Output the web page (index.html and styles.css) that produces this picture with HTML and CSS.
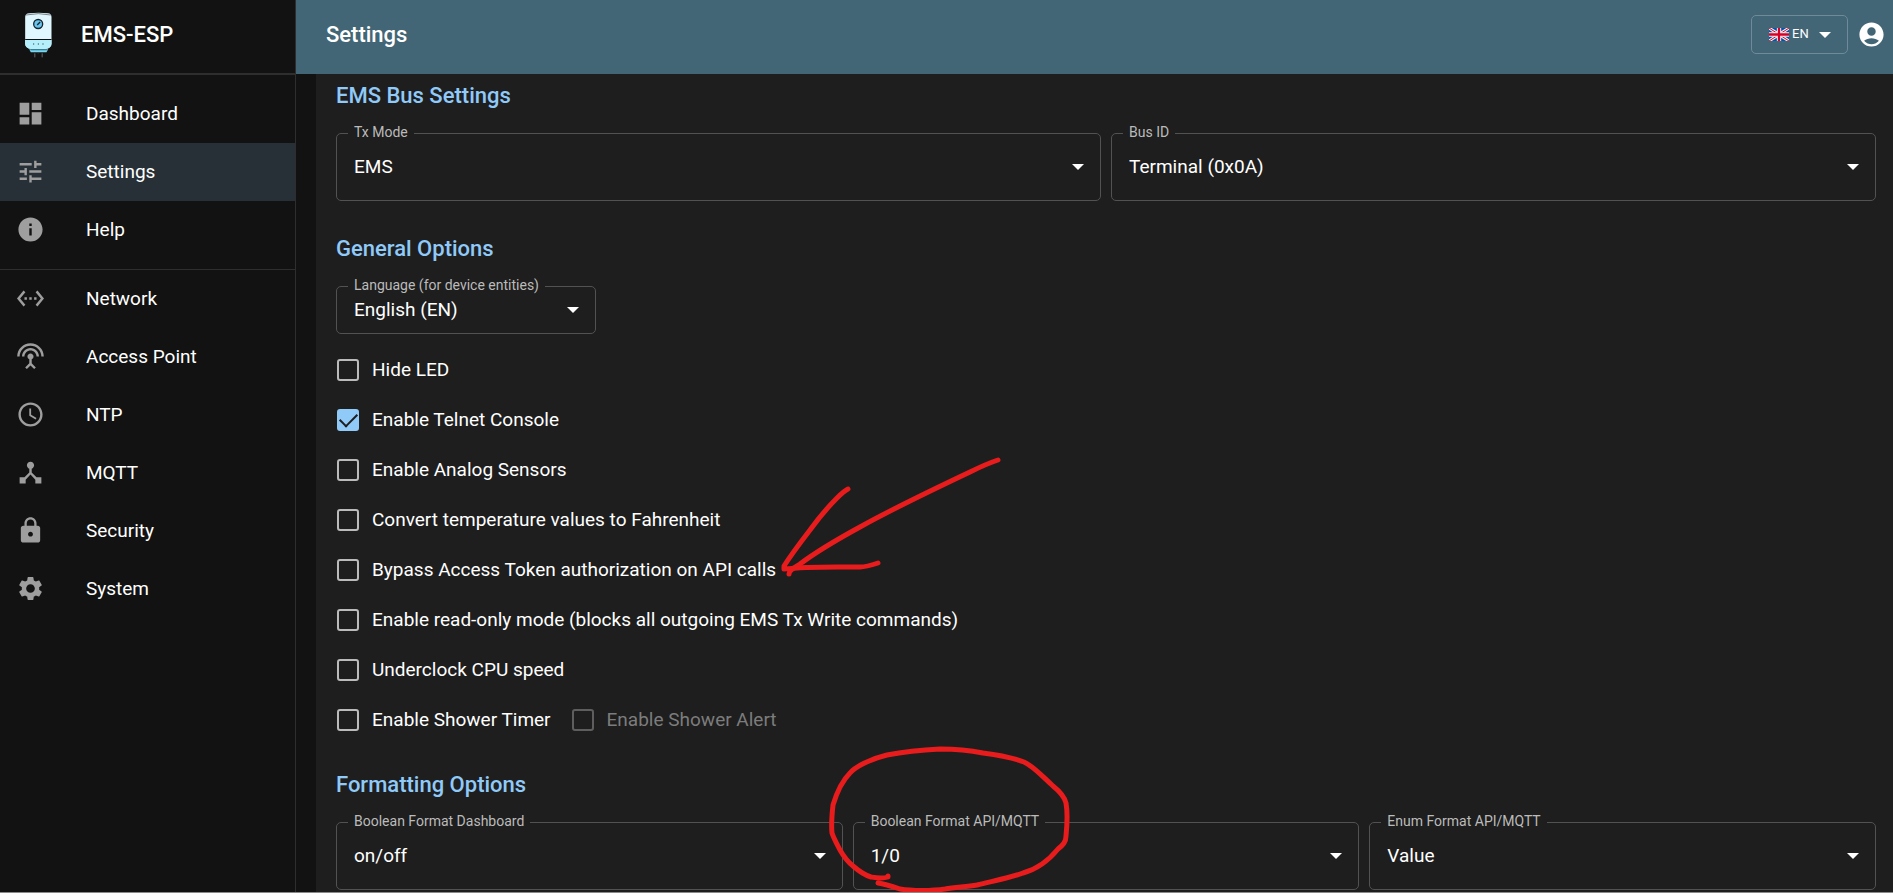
FILE: index.html
```html
<!DOCTYPE html>
<html lang="en">
<head>
<meta charset="utf-8">
<title>EMS-ESP Settings</title>
<link rel="stylesheet" href="styles.css">
</head>
<body>
<div class="app">
  <aside class="sidebar">
    <div class="brand">
      <svg class="brand-logo" viewBox="70 32 92 144" aria-hidden="true">
        <path d="M76 50Q76 40 88 39Q116 35 144 39Q155 40 155 50V130Q155 143 136 146H95Q76 143 76 130Z" fill="#e1f7ff"/>
        <path d="M76 119H155V130Q155 143 136 146H95Q76 143 76 130Z" fill="#b4effb"/>
        <path d="M76 117.500H155" stroke="#111" stroke-width="3"/>
        <path d="M78 44Q116 36 153 44" fill="none" stroke="#111" stroke-width="1.500"/>
        <circle cx="115" cy="71" r="13.500" fill="#66c4ee" stroke="#16252e" stroke-width="4"/>
        <path d="M112 74L121 65" stroke="#16252e" stroke-width="4"/>
        <path d="M100 131h3M114 131h3M128 131h3" stroke="#16252e" stroke-width="3"/>
        <path d="M88 147H145L140 156H93Z" fill="#74d9f4"/>
        <path d="M92 148.500H142" stroke="#16252e" stroke-width="1.500"/>
        <path d="M105 159V171M127 159V171" stroke="#666" stroke-width="3"/>
        <path d="M115 158V162" stroke="#333" stroke-width="2"/>
      </svg>
      <span class="brand-name">EMS-ESP</span>
    </div>
    <nav>
      <div class="nav-group nav-group-first">
        <a class="nav-item" href="#dashboard"><svg class="icon" viewBox="0 0 24 24"><path d="M3 13h8V3H3v10zm0 8h8v-6H3v6zm10 0h8V11h-8v10zm0-18v6h8V3h-8z"/></svg>Dashboard</a>
        <a class="nav-item nav-item-active" href="#settings"><svg class="icon" viewBox="0 0 24 24"><path d="M3 17v2h6v-2H3zM3 5v2h10V5H3zm10 16v-2h8v-2h-8v-2h-2v6h2zM7 9v2H3v2h4v2h2V9H7zm14 4v-2H11v2h10zm-6-4h2V7h4V5h-4V3h-2v6z"/></svg>Settings</a>
        <a class="nav-item" href="#help"><svg class="icon" viewBox="0 0 24 24"><path d="M12 2C6.480 2 2 6.480 2 12s4.480 10 10 10 10-4.480 10-10S17.520 2 12 2zm1 15h-2v-6h2v6zm0-8h-2V7h2v2z"/></svg>Help</a>
      </div>
      <div class="nav-group">
        <a class="nav-item" href="#network"><svg class="icon" viewBox="0 0 24 24"><path d="M7.770 6.760L6.230 5.480.82 12l5.410 6.520 1.540-1.280L3.420 12l4.350-5.240zM7 13h2v-2H7v2zm10-2h-2v2h2v-2zm-6 2h2v-2h-2v2zm6.770-7.520l-1.540 1.280L20.580 12l-4.350 5.240 1.540 1.280L23.180 12l-5.410-6.520z"/></svg>Network</a>
        <a class="nav-item" href="#ap"><svg class="icon" viewBox="0 0 24 24"><path d="M12 5c-3.870 0-7 3.130-7 7h2c0-2.760 2.240-5 5-5s5 2.240 5 5h2c0-3.870-3.130-7-7-7zm1 9.290c.88-.39 1.500-1.260 1.500-2.290 0-1.380-1.120-2.500-2.500-2.500S9.500 10.620 9.500 12c0 1.020.62 1.900 1.500 2.290v3.300L7.590 21 9 22.410l3-3 3 3L16.410 21 13 17.590v-3.300zM12 1C5.930 1 1 5.930 1 12h2c0-4.970 4.030-9 9-9s9 4.030 9 9h2c0-6.070-4.930-11-11-11z"/></svg>Access Point</a>
        <a class="nav-item" href="#ntp"><svg class="icon" viewBox="0 0 24 24"><path d="M11.990 2C6.470 2 2 6.480 2 12s4.470 10 9.990 10C17.520 22 22 17.520 22 12S17.520 2 11.990 2zM12 20c-4.420 0-8-3.580-8-8s3.580-8 8-8 8 3.580 8 8-3.580 8-8 8zm.5-13H11v6l5.250 3.150.75-1.230-4.500-2.670z"/></svg>NTP</a>
        <a class="nav-item" href="#mqtt"><svg class="icon" viewBox="0 0 24 24"><path d="M17 16l-4-4V8.820C14.160 8.400 15 7.300 15 6c0-1.660-1.340-3-3-3S9 4.340 9 6c0 1.300.84 2.400 2 2.820V12l-4 4H3v5h5v-3.050l4-4.200 4 4.200V21h5v-5h-4z"/></svg>MQTT</a>
        <a class="nav-item" href="#security"><svg class="icon" viewBox="0 0 24 24"><path d="M18 8h-1V6c0-2.760-2.240-5-5-5S7 3.240 7 6v2H6c-1.100 0-2 .9-2 2v10c0 1.100.9 2 2 2h12c1.100 0 2-.9 2-2V10c0-1.100-.9-2-2-2zm-6 9c-1.100 0-2-.9-2-2s.9-2 2-2 2 .9 2 2-.9 2-2 2zm3.100-9H8.900V6c0-1.710 1.390-3.100 3.100-3.100 1.710 0 3.100 1.390 3.100 3.100v2z"/></svg>Security</a>
        <a class="nav-item" href="#system"><svg class="icon" viewBox="0 0 24 24"><path d="M19.140 12.940c.04-.3.06-.61.06-.94 0-.32-.02-.64-.07-.94l2.030-1.580c.18-.14.23-.41.12-.61l-1.920-3.320c-.12-.22-.37-.29-.59-.22l-2.390.96c-.5-.38-1.030-.7-1.620-.94l-.36-2.540c-.04-.24-.24-.41-.48-.41h-3.840c-.24 0-.43.17-.47.41l-.36 2.540c-.59.24-1.130.57-1.620.94l-2.390-.96c-.22-.08-.47 0-.59.22L2.740 8.870c-.12.21-.08.47.12.61l2.030 1.580c-.05.3-.09.63-.09.94s.02.64.07.94l-2.030 1.580c-.18.14-.23.41-.12.61l1.920 3.320c.12.22.37.29.59.22l2.390-.96c.5.38 1.030.7 1.620.94l.36 2.540c.05.24.24.41.48.41h3.840c.24 0 .44-.17.47-.41l.36-2.540c.59-.24 1.130-.56 1.620-.94l2.390.96c.22.08.47 0 .59-.22l1.920-3.320c.12-.22.07-.47-.12-.61l-2.010-1.580zM12 15.600c-1.980 0-3.600-1.620-3.600-3.600s1.620-3.600 3.600-3.600 3.600 1.620 3.600 3.600-1.620 3.600-3.600 3.600z"/></svg>System</a>
      </div>
    </nav>
  </aside>

  <div class="page">
    <header class="topbar">
      <h1 class="topbar-title">Settings</h1>
      <div class="locale">
        <svg class="flag" viewBox="0 0 60 39" aria-hidden="true">
          <rect width="60" height="39" fill="#0052b4"/>
          <path d="M0 0L60 39M60 0L0 39" stroke="#f0f0f0" stroke-width="9"/>
          <path d="M0 0L60 39M60 0L0 39" stroke="#d80027" stroke-width="3"/>
          <path d="M30 0V39M0 19.500H60" stroke="#f0f0f0" stroke-width="13"/>
          <path d="M30 0V39M0 19.500H60" stroke="#d80027" stroke-width="7"/>
        </svg>
        <select class="locale-select" aria-label="Interface language"><option>EN</option></select>
        <svg class="caret" viewBox="0 0 12 6" aria-hidden="true"><path d="M0 0h12L6 6z"/></svg>
      </div>
      <button class="account" type="button" aria-label="Account"><svg class="account-icon" viewBox="0 0 24 24"><path d="M12 2C6.480 2 2 6.480 2 12s4.480 10 10 10 10-4.480 10-10S17.520 2 12 2zm0 4c1.930 0 3.500 1.570 3.500 3.500S13.930 13 12 13s-3.500-1.570-3.500-3.500S10.070 6 12 6zm0 14c-2.030 0-4.430-.82-6.140-2.880C7.550 15.800 9.680 15 12 15s4.450.8 6.140 2.120C16.430 19.180 14.030 20 12 20z"/></svg></button>
    </header>

    <main class="content">
      <form class="panel">
        <section>
          <h2 class="section-title">EMS Bus Settings</h2>
          <div class="fields">
            <div class="field">
              <label class="field-label" for="tx">Tx Mode</label>
              <select class="field-select" id="tx"><option>EMS</option></select>
              <svg class="caret" viewBox="0 0 12 6" aria-hidden="true"><path d="M0 0h12L6 6z"/></svg>
            </div>
            <div class="field">
              <label class="field-label" for="bus">Bus ID</label>
              <select class="field-select" id="bus"><option>Terminal (0x0A)</option></select>
              <svg class="caret" viewBox="0 0 12 6" aria-hidden="true"><path d="M0 0h12L6 6z"/></svg>
            </div>
          </div>
        </section>

        <section>
          <h2 class="section-title">General Options</h2>
          <div class="field field-small">
            <label class="field-label" for="lang">Language (for device entities)</label>
            <select class="field-select" id="lang"><option>English (EN)</option></select>
            <svg class="caret" viewBox="0 0 12 6" aria-hidden="true"><path d="M0 0h12L6 6z"/></svg>
          </div>
          <div class="options">
            <div class="option-row"><label class="option"><input class="check" type="checkbox">Hide LED</label></div>
            <div class="option-row"><label class="option"><input class="check" type="checkbox" checked>Enable Telnet Console</label></div>
            <div class="option-row"><label class="option"><input class="check" type="checkbox">Enable Analog Sensors</label></div>
            <div class="option-row"><label class="option"><input class="check" type="checkbox">Convert temperature values to Fahrenheit</label></div>
            <div class="option-row"><label class="option"><input class="check" type="checkbox">Bypass Access Token authorization on API calls</label></div>
            <div class="option-row"><label class="option"><input class="check" type="checkbox">Enable read-only mode (blocks all outgoing EMS Tx Write commands)</label></div>
            <div class="option-row"><label class="option"><input class="check" type="checkbox">Underclock CPU speed</label></div>
            <div class="option-row">
              <label class="option"><input class="check" type="checkbox">Enable Shower Timer</label>
              <label class="option option-disabled"><input class="check" type="checkbox" disabled>Enable Shower Alert</label>
            </div>
          </div>
        </section>

        <section>
          <h2 class="section-title">Formatting Options</h2>
          <div class="fields">
            <div class="field">
              <label class="field-label" for="bool-dash">Boolean Format Dashboard</label>
              <select class="field-select" id="bool-dash"><option>on/off</option></select>
              <svg class="caret" viewBox="0 0 12 6" aria-hidden="true"><path d="M0 0h12L6 6z"/></svg>
            </div>
            <div class="field">
              <label class="field-label" for="bool-api">Boolean Format API/MQTT</label>
              <select class="field-select" id="bool-api"><option>1/0</option></select>
              <svg class="caret" viewBox="0 0 12 6" aria-hidden="true"><path d="M0 0h12L6 6z"/></svg>
            </div>
            <div class="field">
              <label class="field-label" for="enum-api">Enum Format API/MQTT</label>
              <select class="field-select" id="enum-api"><option>Value</option></select>
              <svg class="caret" viewBox="0 0 12 6" aria-hidden="true"><path d="M0 0h12L6 6z"/></svg>
            </div>
          </div>
        </section>
      </form>
    </main>
  </div>

  <svg class="markup" aria-hidden="true">
    <path d="M998 460C992 462 982 466 970 472C932 490 894 508 860 527C838 539 816 552 800 564C794 568 789 570 789 574"/>
    <path d="M848 489C846 490 842 493 837 498C828 507 818 519 810 530C800 543 791 555 784 566V569C810 566 840 567 860 567C866 567 872 565 878 563"/>
    <path d="M878 883C885 884 891 886 900 889C912 891 932 891 945 889C956 887 966 887 977 885C993 881 1010 878 1023 873C1038 869 1049 860 1058 849C1063 845 1066 842 1066 836C1067 826 1068 814 1066 803C1064 795 1058 790 1053 786C1041 775 1033 766 1024 762C1011 757 998 755 983 753C968 750 953 749 940 749C922 750 903 752 887 755C870 759 855 767 850 773C841 782 836 795 833 805C832 814 831 824 832 833C834 839 837 844 840 850C844 857 848 862 853 866C860 872 864 875 871 877C877 878 882 879 888 877V876"/>
  </svg>
</div>
</body>
</html>
```
FILE: styles.css
```css
* {
  box-sizing: border-box;
}

body {
  margin: 0;
  background: #121212;
  color: #fff;
  font-family: Roboto, "Liberation Sans", sans-serif;
  font-size: 19px;
  line-height: 28px;
}

.app {
  position: relative;
  display: flex;
  height: 100vh;
  overflow: hidden;
  border-bottom: 1px solid #8a8a8a;
}

.sidebar {
  flex: none;
  width: 296px;
  border-right: 1px solid #2e2e2e;
}

.brand {
  display: flex;
  align-items: center;
  gap: 27px;
  height: 75px;
  padding: 0 23px 4px;
  border-bottom: 2px solid #2e2e2e;
}

.brand-logo {
  width: 31px;
  height: 48px;
}

.brand-name {
  font-size: 22px;
  font-weight: 500;
}

.nav-group-first {
  padding: 10px 0;
  border-bottom: 1px solid #2e2e2e;
}

.nav-item {
  display: flex;
  align-items: center;
  gap: 41px;
  height: 58px;
  padding: 0 16px 1px;
  color: #fff;
  text-decoration: none;
}

.nav-item-active {
  background: #263036;
}

.icon {
  width: 29px;
  height: 29px;
  fill: #9e9e9e;
}

.page {
  display: flex;
  flex: 1;
  flex-direction: column;
  min-width: 0;
}

.topbar {
  display: flex;
  flex: none;
  align-items: center;
  height: 74px;
  padding: 0 7px 5px 30px;
  background: #426676;
}

.topbar-title {
  flex: 1;
  margin: 0;
  font-size: 22px;
  font-weight: 500;
}

.locale {
  position: relative;
  display: flex;
  align-items: center;
  width: 97px;
  height: 39px;
  border: 1px solid #6f8b97;
  border-radius: 5px;
}

.flag {
  position: absolute;
  left: 17px;
  width: 20px;
  height: 13px;
  pointer-events: none;
}

.locale-select,
.field-select {
  width: 100%;
  height: 100%;
  border: 0;
  outline: 0;
  appearance: none;
  background: transparent;
  color: #fff;
  font-family: inherit;
}

.locale-select {
  padding: 0 16px 2px 40px;
  font-size: 13px;
}

.caret {
  position: absolute;
  top: calc(50% - 3px);
  right: 16px;
  width: 12px;
  height: 6px;
  fill: #fff;
  pointer-events: none;
}

.account {
  display: flex;
  margin-left: 9px;
  padding: 0;
  border: 0;
  background: none;
}

.account-icon {
  width: 29px;
  height: 29px;
  fill: #fff;
}

.content {
  flex: 1;
  min-height: 0;
  padding-left: 20px;
}

.panel {
  height: 100%;
  padding: 8px 17px 0 20px;
  background: #1e1e1e;
}

.section-title {
  margin: 0;
  color: #90caf9;
  font-size: 22px;
  font-weight: 500;
  line-height: 28px;
}

.fields {
  display: flex;
  gap: 10px;
  margin: 23px 0 34px;
}

.field {
  position: relative;
  flex: 1;
  height: 68px;
  border: 1px solid #525252;
  border-radius: 5px;
}

.field-small {
  width: 260px;
  height: 48px;
  margin-top: 23px;
}

.field-label {
  position: absolute;
  top: -12px;
  left: 11px;
  padding: 0 6px;
  background: #1e1e1e;
  color: #bbb;
  font-size: 14px;
  line-height: 20px;
}

.field-select {
  padding: 0 32px 2px 17px;
  font-size: 19px;
}

.options {
  margin: 11px 0 26px;
}

.option-row {
  display: flex;
  align-items: center;
  gap: 20px;
  height: 50px;
}

.option {
  display: flex;
  align-items: center;
  gap: 13px;
}

.option-disabled {
  color: #7c7c7c;
}

.check {
  display: grid;
  place-items: center;
  width: 22px;
  height: 22px;
  margin: 0 0 0 1px;
  border: 2px solid #bbb;
  border-radius: 3px;
  appearance: none;
}

.check:checked {
  border-color: #90caf9;
  background: #90caf9;
}

.check:checked::before {
  content: "";
  width: 15px;
  height: 8px;
  margin-bottom: 5px;
  border: solid #1e1e1e;
  border-width: 0 0 2px 2px;
  transform: rotate(-45deg);
}

.check:disabled {
  border-color: #5e5e5e;
}

.markup {
  position: absolute;
  inset: 0;
  width: 100%;
  height: 100%;
  fill: none;
  stroke: #e81c1c;
  stroke-width: 5;
  stroke-linecap: round;
  stroke-linejoin: round;
  pointer-events: none;
}
```
